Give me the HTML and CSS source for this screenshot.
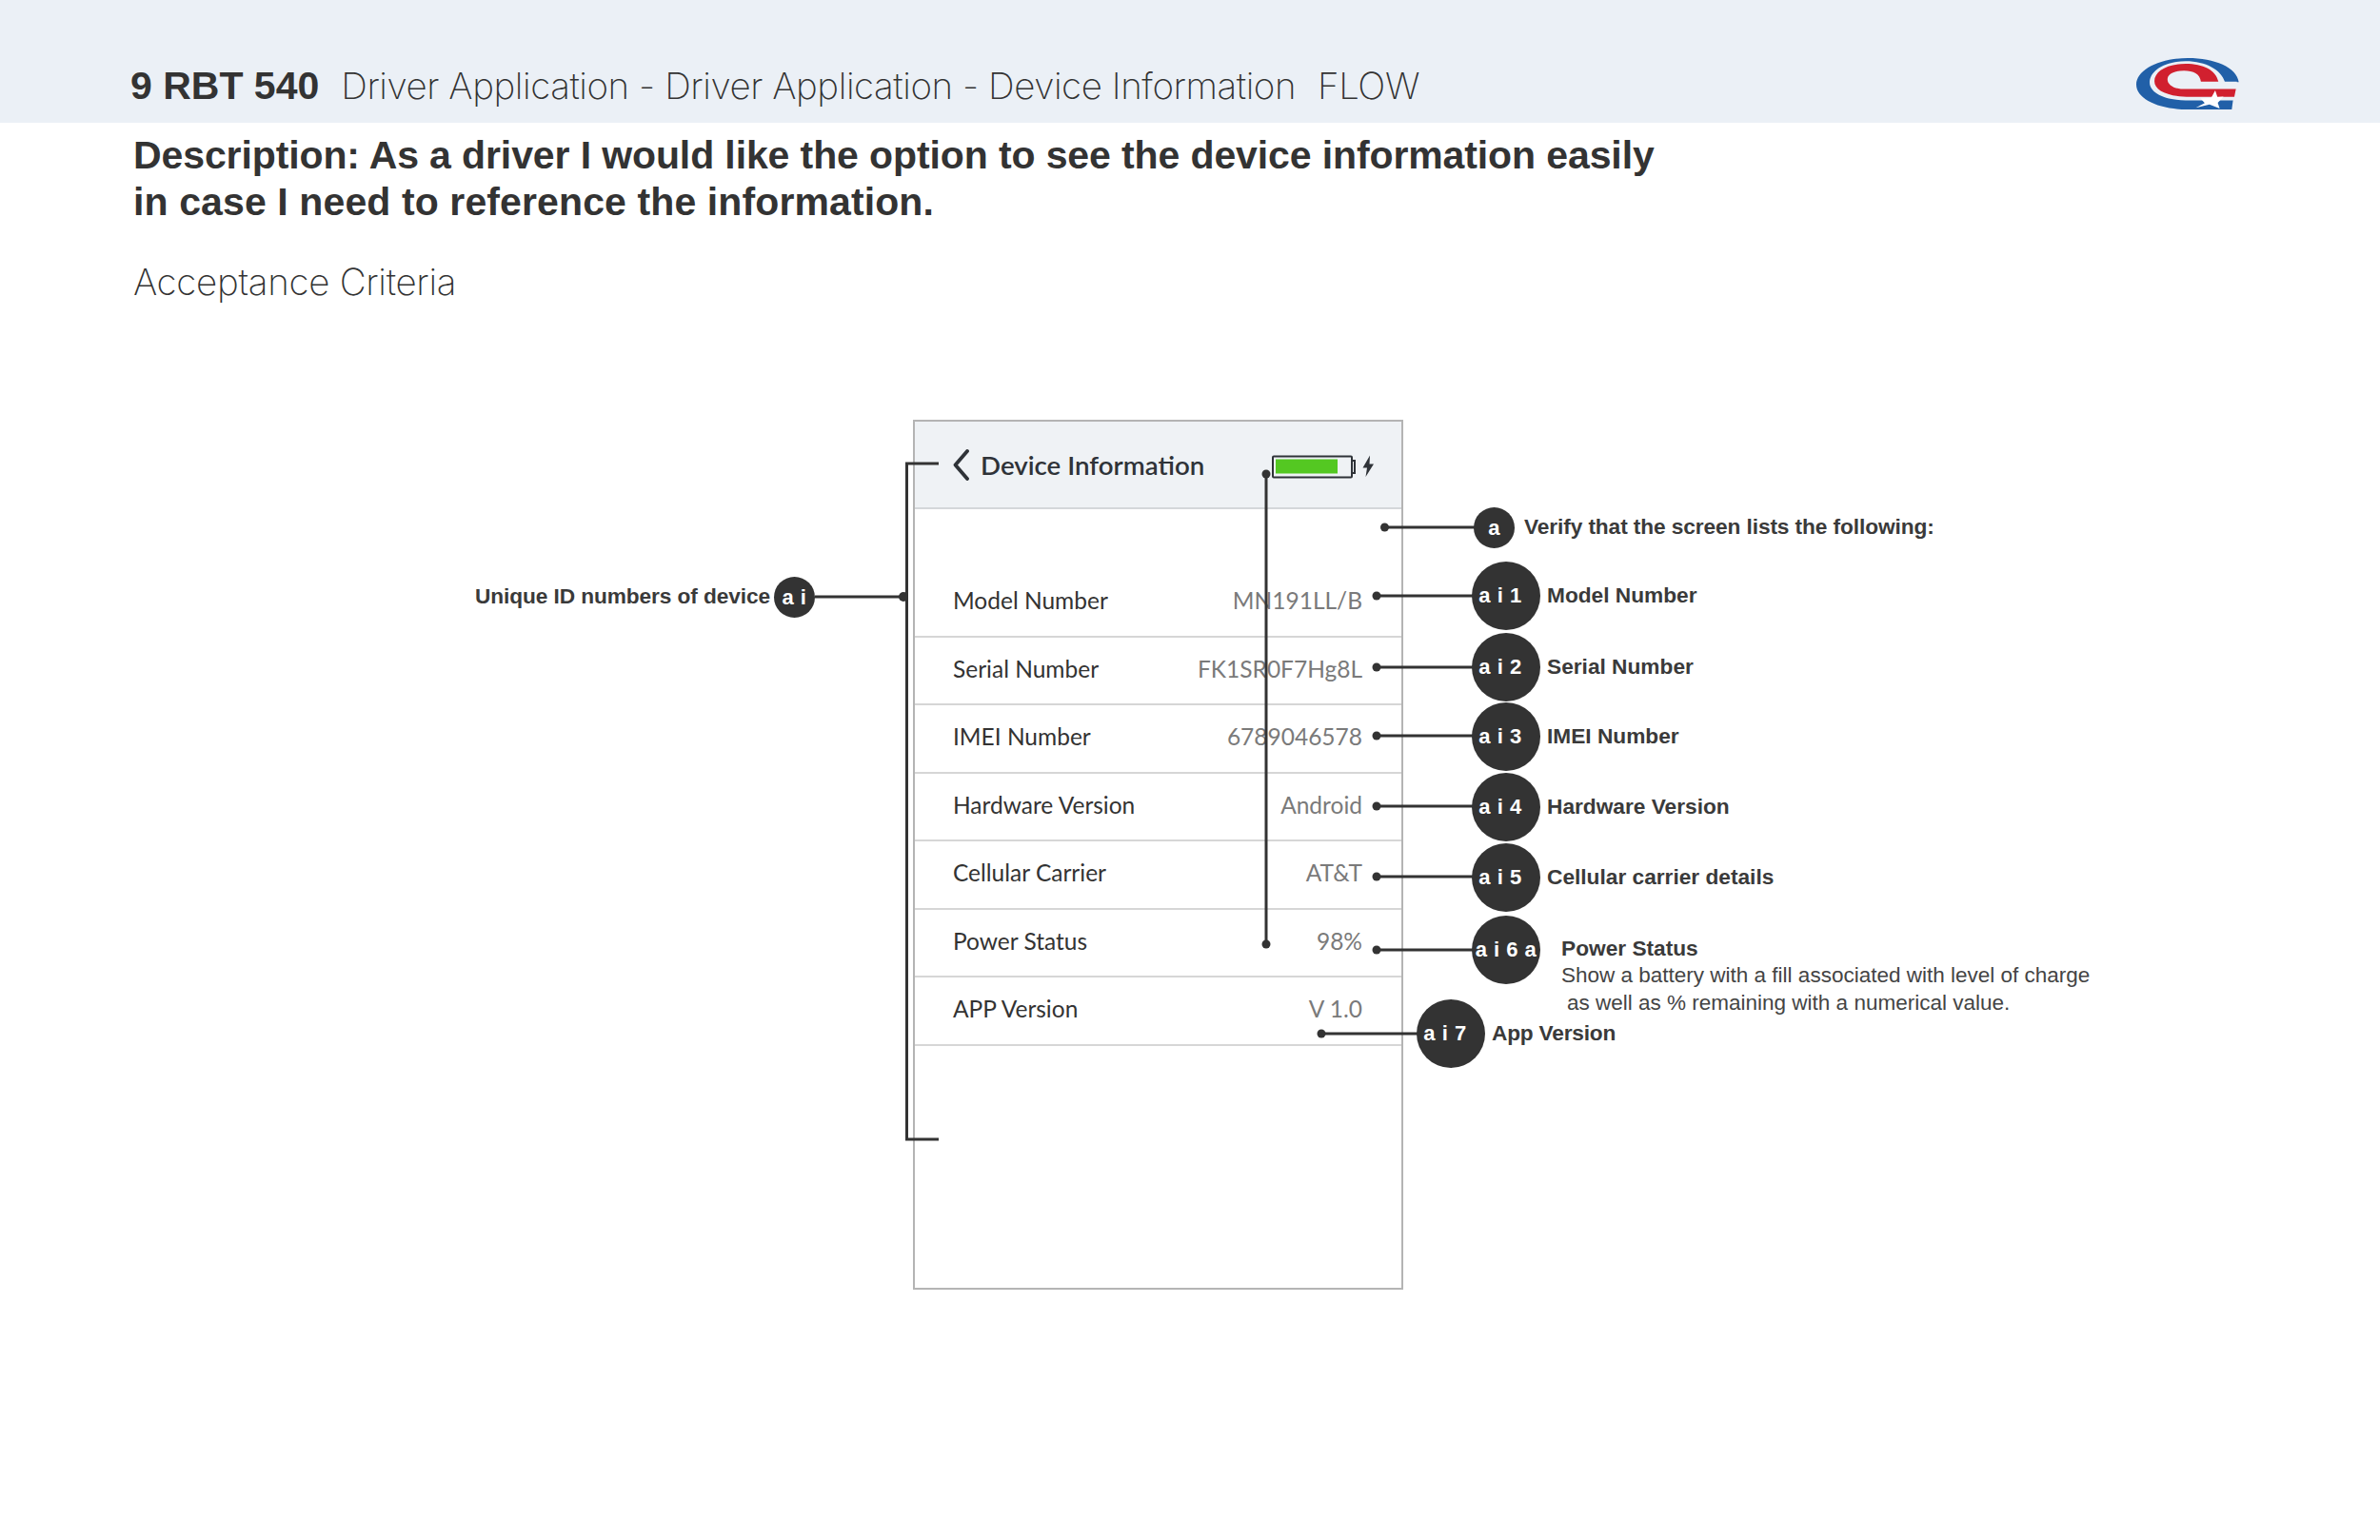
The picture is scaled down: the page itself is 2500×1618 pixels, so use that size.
FILE: index.html
```html
<!DOCTYPE html>
<html lang="en">
<head>
<meta charset="utf-8">
<title>9 RBT 540 Driver Application - Device Information FLOW</title>
<link rel="stylesheet" href="styles.css">
</head>
<body>
<div class="sheet">
  <header class="band">
    <h1 class="title"><strong class="title-id">9 RBT 540</strong><span class="title-text">Driver Application - Driver Application - Device Information</span><span class="title-text">FLOW</span></h1>
    <svg class="logo" viewBox="130 62 323 163" preserveAspectRatio="none" aria-label="Logo">
      <path fill="#2160a8" d="M452 138C446 92 376 62 292 62C200 62 130 100 130 146C130 192 200 225 290 225L430 225L434 195L442 138Z"/>
      <path fill="#ebf0f6" d="M408 137C396 100 350 72 285 72C215 72 172 105 172 140C172 170 215 196 285 196L436 196L446 156L446 137Z"/>
      <path fill="#d1202f" d="M388 137C380 100 340 80 285 80C225 80 187 105 187 135C187 165 230 185 300 185L438 185L443 160L270 160C245 158 228 145 228 130C228 112 250 102 280 102C310 102 330 112 333 137Z"/>
      <path fill="#fff" d="M378 165L385 186L404 184L386 204L392 222L360 209L317 220L345 205L332 190L365 189Z"/>
    </svg>
  </header>
  <section class="intro">
    <h2 class="desc"><span class="desc-first">Description: As a driver I would like the option to see the device information easily</span><span class="desc-second">in case I need to reference the information.</span></h2>
    <p class="criteria">Acceptance Criteria</p>
  </section>

  <div class="phone">
    <div class="phone-bar">
      <svg class="chevron" viewBox="0 0 17 33"><path d="M15 2L2.500 16.500L15 31"/></svg>
      <span class="phone-title">Device Information</span>
      <svg class="battery" viewBox="0 0 110 26">
        <rect class="batt-body" x="1" y="1.500" width="83" height="22" rx="1"/>
        <path class="batt-tip" d="M84 6H87V19H84"/>
        <rect class="batt-fill" x="4" y="4.500" width="65" height="15"/>
        <path class="batt-bolt" d="M103 0.500L95.500 13.500H100L98.500 23L107 9.500H102.500Z"/>
      </svg>
    </div>
    <div class="rows">
      <div class="row"><span>Model Number</span><span class="val">MN191LL/B</span></div>
      <div class="row"><span>Serial Number</span><span class="val">FK1SR0F7Hg8L</span></div>
      <div class="row"><span>IMEI Number</span><span class="val">6789046578</span></div>
      <div class="row"><span>Hardware Version</span><span class="val">Android</span></div>
      <div class="row"><span>Cellular Carrier</span><span class="val">AT&amp;T</span></div>
      <div class="row"><span>Power Status</span><span class="val">98%</span></div>
      <div class="row"><span>APP Version</span><span class="val">V 1.0</span></div>
    </div>
  </div>

  <svg class="wires" viewBox="0 0 2500 1618">
    <path d="M986 487H952.500V1197H986"/>
    <path d="M856 627H949"/>
    <path d="M1330 498V992"/>
    <path d="M1454 554H1550"/>
    <path d="M1446 626H1550"/>
    <path d="M1446 701H1550"/>
    <path d="M1446 773H1550"/>
    <path d="M1446 847H1550"/>
    <path d="M1446 921H1550"/>
    <path d="M1446 998H1550"/>
    <path d="M1388 1086H1492"/>
    <circle cx="949" cy="627" r="5"/>
    <circle cx="1330" cy="498" r="4.500"/>
    <circle cx="1330" cy="992" r="4.500"/>
    <circle cx="1454.500" cy="554" r="4.500"/>
    <circle cx="1446" cy="626" r="4.500"/>
    <circle cx="1446" cy="701" r="4.500"/>
    <circle cx="1446" cy="773" r="4.500"/>
    <circle cx="1446" cy="847" r="4.500"/>
    <circle cx="1446" cy="921" r="4.500"/>
    <circle cx="1446" cy="998" r="4.500"/>
    <circle cx="1388" cy="1086" r="4.500"/>
  </svg>

  <div class="callout c-left"><span class="label">Unique ID numbers of device</span><span class="badge small">a i</span></div>
  <div class="callout c-a"><span class="badge small">a</span><span class="label">Verify that the screen lists the following:</span></div>
  <div class="callout c-1"><span class="badge">a i 1</span><span class="label">Model Number</span></div>
  <div class="callout c-2"><span class="badge">a i 2</span><span class="label">Serial Number</span></div>
  <div class="callout c-3"><span class="badge">a i 3</span><span class="label">IMEI Number</span></div>
  <div class="callout c-4"><span class="badge">a i 4</span><span class="label">Hardware Version</span></div>
  <div class="callout c-5"><span class="badge">a i 5</span><span class="label">Cellular carrier details</span></div>
  <div class="callout c-6"><span class="badge wide">a i 6 a</span>
    <div class="note">
      <span class="label">Power Status</span>
      <p class="note-line">Show a battery with a fill associated with level of charge</p>
      <p class="note-line indent">as well as % remaining with a numerical value.</p>
    </div>
  </div>
  <div class="callout c-7"><span class="badge">a i 7</span><span class="label">App Version</span></div>
</div>
</body>
</html>
```

FILE: styles.css
```css
* { box-sizing: border-box; }
html, body { margin: 0; background: #fff; }
.sheet {
  position: relative;
  width: 2500px;
  height: 1618px;
  overflow: hidden;
  color: #333;
  font-family: "Liberation Sans", Arial, sans-serif;
}
.band {
  height: 129px;
  background: #ebf0f6;
  padding: 61px 148px 0 137px;
  display: flex;
  justify-content: space-between;
  align-items: flex-start;
}
.title {
  margin: 4px 0 0;
  display: flex;
  gap: 23px;
  font-size: 41px;
  line-height: 50px;
  font-weight: 400;
  white-space: nowrap;
}
.title-id { font-weight: 700; }
.title-text {
  font-family: Inter, "Liberation Sans", sans-serif;
  font-weight: 250;
  font-size: 38.500px;
  letter-spacing: -0.45px;
}
.logo { width: 108px; height: 54px; flex: none; }
.intro { padding: 10px 0 0 140px; }
.desc {
  margin: 0;
  font-size: 41px;
  line-height: 49px;
  font-weight: 700;
  white-space: nowrap;
}
.desc-first, .desc-second { display: block; }
.desc-first { letter-spacing: -0.11px; }
.desc-second { letter-spacing: 0.11px; }
.criteria {
  margin: 34px 0 0;
  font-family: Inter, "Liberation Sans", sans-serif;
  font-weight: 250;
  font-size: 38.500px;
  line-height: 50px;
  letter-spacing: -0.3px;
}

/* phone mock */
.phone {
  position: absolute;
  left: 959px;
  top: 441px;
  width: 515px;
  height: 914px;
  border: 2px solid #b4b4b4;
  font-family: Lato, "Liberation Sans", sans-serif;
}
.phone-bar {
  height: 92px;
  background: #eff2f5;
  border-bottom: 2px solid #d4d7da;
  display: flex;
  align-items: center;
  padding-left: 40px;
}
.chevron { width: 17px; height: 33px; flex: none; }
.chevron path { fill: none; stroke: #2f3338; stroke-width: 3.800; stroke-linecap: round; stroke-linejoin: round; }
.phone-title {
  margin-left: 12px;
  font-size: 27.700px;
  font-weight: 600;
  color: #2f3338;
  white-space: nowrap;
}
.battery { width: 110px; height: 26px; margin: 5px 0 0 71px; flex: none; }
.batt-body, .batt-tip { fill: none; stroke: #2f3338; stroke-width: 2; }
.batt-fill { fill: #54c822; }
.batt-bolt { fill: #2f3338; }
.rows { padding-top: 63px; }
.row {
  height: 71.500px;
  padding: 0 41px 4px 40px;
  display: flex;
  justify-content: space-between;
  align-items: center;
  border-bottom: 2px solid #d6d6d6;
  font-size: 24.500px;
  color: #333;
  white-space: nowrap;
}
.val { color: #7a7a7a; }

/* connectors */
.wires {
  position: absolute;
  inset: 0;
  width: 2500px;
  height: 1618px;
  pointer-events: none;
}
.wires path { fill: none; stroke: #333; stroke-width: 3; }
.wires circle { fill: #333; }

/* callouts */
.callout {
  position: absolute;
  display: flex;
  align-items: center;
  gap: 7px;
  white-space: nowrap;
}
.callout > .label { margin-bottom: 3px; }
.badge {
  width: 72px;
  height: 72px;
  flex: none;
  border-radius: 50%;
  background: #333;
  color: #fff;
  font-weight: 700;
  font-size: 22px;
  display: flex;
  align-items: center;
  justify-content: center;
  letter-spacing: 0.5px;
  padding-right: 12px;
}
.badge.small { width: 43px; height: 43px; padding-right: 0; }
.badge.wide { padding-right: 0; }
.label {
  font-weight: 700;
  font-size: 22.700px;
  line-height: 30px;
  color: #3a3a3a;
}
.c-left { left: 499px; top: 606px; gap: 4px; }
.c-left .label { letter-spacing: -0.1px; }
.c-a { left: 1548px; top: 533px; gap: 10px; }
.c-a .label { letter-spacing: -0.1px; }
.c-1 { left: 1546px; top: 590px; }
.c-2 { left: 1546px; top: 665px; }
.c-3 { left: 1546px; top: 738px; }
.c-4 { left: 1546px; top: 812px; }
.c-5 { left: 1546px; top: 886px; }
.c-6 { left: 1546px; top: 962px; align-items: flex-start; gap: 22px; }
.c-7 { left: 1488px; top: 1050px; }
.c-7 .label { letter-spacing: -0.2px; }
.note { padding-top: 19px; display: flex; flex-direction: column; }
.note-line {
  margin: 0;
  font-size: 22.500px;
  line-height: 28.500px;
  color: #444;
}
.indent { padding-left: 6px; }
```
